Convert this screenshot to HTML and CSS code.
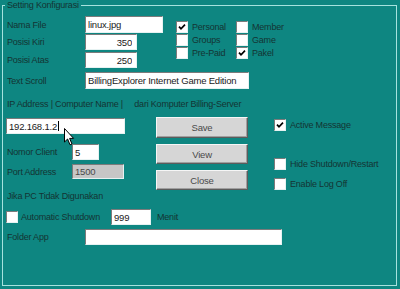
FILE: index.html
```html
<!DOCTYPE html>
<html lang="en">
<head>
    <meta charset="UTF-8">
    <title>Setting Konfigurasi</title>
    <link rel="stylesheet" href="styles.css">
</head>
<body>
    <div class="frame">
        <div class="legend">Setting Konfigurasi</div>

        <!-- Top: file, position, client type -->
        <div class="top">
            <div class="fields">
                <div class="row">
                    <label class="lbl">Nama File</label>
                    <input class="box w-file" type="text" value="linux.jpg">
                </div>
                <div class="row r2">
                    <label class="lbl">Posisi Kiri</label>
                    <input class="box w-num num" type="text" value="350">
                </div>
                <div class="row r3">
                    <label class="lbl">Posisi Atas</label>
                    <input class="box w-num num" type="text" value="250">
                </div>
            </div>
            <div class="checks">
                <div class="opt"><span class="cb checked"><svg viewBox="0 0 8 8"><path d="M1 3.6 L3 5.8 L7 1.6"/></svg></span>Personal</div>
                <div class="opt"><span class="cb"></span>Member</div>
                <div class="opt"><span class="cb"></span>Groups</div>
                <div class="opt"><span class="cb"></span>Game</div>
                <div class="opt"><span class="cb"></span>Pre-Paid</div>
                <div class="opt"><span class="cb checked"><svg viewBox="0 0 8 8"><path d="M1 3.6 L3 5.8 L7 1.6"/></svg></span>Pakel</div>
            </div>
        </div>

        <div class="row scroll">
            <label class="lbl">Text Scroll</label>
            <input class="box w-scroll" type="text" value="BillingExplorer Internet Game Edition">
        </div>

        <div class="caption ip-caption">
            <span>IP Address | Computer Name |</span>
            <span class="server">dari Komputer Billing-Server</span>
        </div>

        <!-- Middle: network, buttons, options -->
        <div class="mid">
            <div class="left">
                <div class="box w-ip">192.168.1.2<span class="caret"></span></div>
                <div class="row nomor">
                    <label class="lbl short">Nomor Client</label>
                    <input class="box w-client" type="text" value="5">
                </div>
                <div class="row port">
                    <label class="lbl short">Port Address</label>
                    <input class="box w-port disabled" type="text" value="1500" disabled>
                </div>
            </div>
            <div class="buttons">
                <button class="btn b-save">Save</button>
                <button class="btn">View</button>
                <button class="btn">Close</button>
            </div>
            <div class="opts">
                <div class="opt o-active"><span class="cb checked"><svg viewBox="0 0 8 8"><path d="M1 3.6 L3 5.8 L7 1.6"/></svg></span>Active Message</div>
                <div class="opt o-hide"><span class="cb"></span>Hide Shutdown/Restart</div>
                <div class="opt o-log"><span class="cb"></span>Enable Log Off</div>
            </div>
        </div>

        <div class="caption idle">Jika PC Tidak Digunakan</div>

        <div class="row auto">
            <span class="cb"></span>
            <label class="auto-lbl">Automatic Shutdown</label>
            <input class="box w-min" type="text" value="999">
            <span class="unit">Menit</span>
        </div>

        <div class="row folder">
            <label class="lbl">Folder App</label>
            <input class="box w-folder" type="text" value="">
        </div>
    </div>

    <!-- mouse pointer over the IP field -->
    <svg class="pointer" width="11" height="18" viewBox="0 0 11 18">
        <path d="M0.5 0.5 L0.5 14 L3.6 11 L6 16.8 L8 16 L5.6 10.4 L9.6 10.4 Z" fill="#fff" stroke="#000" stroke-width="1"/>
    </svg>
</body>
</html>
```

FILE: styles.css
```css
html, body {
    margin: 0;
    padding: 0;
}
body {
    position: relative;
    width: 400px;
    height: 289px;
    background-color: #0e8681;
    font-family: "Liberation Sans", Arial, sans-serif;
    font-size: 9px;
    letter-spacing: -0.2px;
    color: #143433;
    overflow: hidden;
}
/* Group frame */
.frame {
    box-sizing: border-box;
    margin: 5px 0 0 2px;
    width: 395px;
    height: 281px;
    border: 1px solid #a6e2de;
}
.legend {
    display: block;
    width: fit-content;
    margin: -6px 0 0 2px;
    padding: 0 2px;
    line-height: 11px;
    background-color: #0e8681;
}
/* Generic rows */
.row {
    display: flex;
    align-items: center;
}
.lbl {
    box-sizing: border-box;
    width: 82px;
    padding-left: 4px;
}
.lbl.short {
    width: 69px;
}
/* Text boxes */
.box {
    box-sizing: border-box;
    height: 16px;
    margin: 0;
    padding: 0 2px;
    background-color: #fff;
    border-style: solid;
    border-width: 1px;
    border-color: #7b7b7b #e6f2f2 #e6f2f2 #7b7b7b;
    font-family: "Liberation Sans", Arial, sans-serif;
    font-size: 9.5px;
    letter-spacing: -0.2px;
    color: #1a1a1a;
    outline: none;
}
.num {
    text-align: right;
    padding-right: 4px;
}
.disabled {
    background-color: #c6c6c6;
    color: #4a4a4a;
}
.w-file { width: 78px; height: 17px; }
.w-num { width: 52px; }
.w-scroll { width: 164px; height: 17px; }
.w-ip {
    display: flex;
    align-items: center;
    width: 119px;
    margin: 1px 0 0 3px;
}
.caret {
    display: inline-block;
    width: 1px;
    height: 10px;
    margin-left: 1px;
    background-color: #000;
}
.w-client { width: 27px; }
.w-port { width: 52px; height: 15px; }
.w-min { width: 40px; }
.w-folder { width: 197px; }
/* Top section */
.top {
    display: flex;
    margin-top: 5px;
}
.r2 { margin-top: 1px; }
.r3 { margin-top: 2px; }
.checks {
    display: grid;
    grid-template-columns: 60px auto;
    row-gap: 1px;
    margin: 5px 0 0 13px;
    align-self: flex-start;
}
.opt {
    display: flex;
    align-items: center;
    gap: 4px;
    height: 12px;
}
.cb {
    box-sizing: border-box;
    display: inline-flex;
    align-items: center;
    justify-content: center;
    width: 12px;
    height: 12px;
    flex-shrink: 0;
    background-color: #fff;
    border-style: solid;
    border-width: 1px;
    border-color: #7b7b7b #e6f2f2 #e6f2f2 #7b7b7b;
}
.cb svg {
    width: 8px;
    height: 8px;
}
.cb path {
    fill: none;
    stroke: #000;
    stroke-width: 1.7;
}
.scroll { margin-top: 4px; }
.caption {
    line-height: 11px;
    padding-left: 4px;
}
.ip-caption { margin-top: 10px; }
.server { margin-left: 9px; }
/* Middle section */
.mid {
    display: flex;
    align-items: flex-start;
    margin-top: 7px;
}
.left {
    width: 153px;
}
.nomor { margin-top: 10px; }
.port { margin-top: 4px; }
.buttons {
    display: flex;
    flex-direction: column;
    gap: 6px;
}
.btn {
    box-sizing: border-box;
    width: 92px;
    height: 20px;
    margin: 0;
    padding: 0;
    background-color: #d6d6d6;
    border-style: solid;
    border-width: 1px;
    border-color: #f6f6f6 #5c5c5c #5c5c5c #f6f6f6;
    box-shadow: inset -1px -1px #a0a0a0;
    font-family: "Liberation Sans", Arial, sans-serif;
    font-size: 9.5px;
    letter-spacing: -0.2px;
    color: #4a4a4a;
}
.b-save { height: 21px; }
.opts {
    margin-left: 26px;
}
.o-active { margin-top: 2px; }
.o-hide { margin-top: 27px; }
.o-log { margin-top: 8px; }
/* Bottom section */
.idle { margin-top: 1px; }
.auto {
    margin-top: 7px;
}
.auto .cb {
    margin: 0 3px 0 3px;
}
.auto-lbl {
    width: 90px;
}
.unit {
    margin-left: 6px;
}
.folder { margin-top: 4px; }
/* Mouse pointer */
.pointer {
    position: absolute;
    left: 64px;
    top: 128px;
}
```
